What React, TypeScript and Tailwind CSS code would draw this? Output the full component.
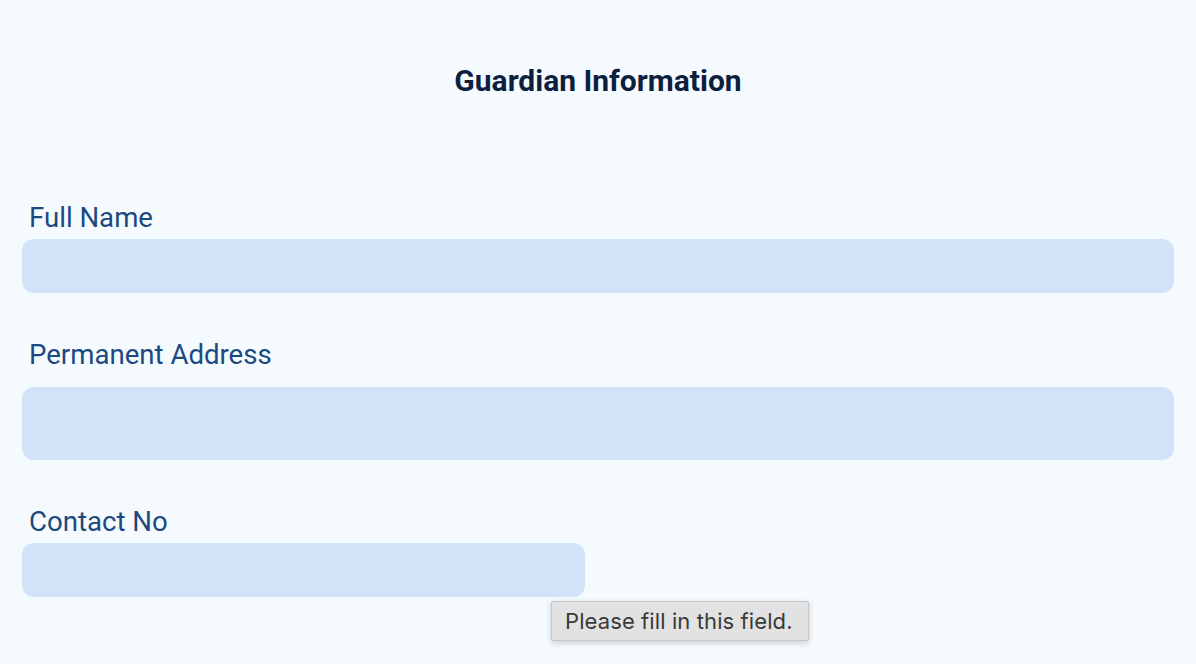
import React from "react";

export default function App() {
  return (
    <div className="min-h-[664px] w-full bg-[#f5faff] px-[22px] pt-[62px] font-['Roboto',sans-serif]">
      <h2 className="text-center text-[30px] font-bold leading-[38px] text-[#0c1f3f]">Guardian Information</h2>
      <div className="mt-[100px]">
        <label className="block pl-[7px] text-[27.6px] leading-[36px] text-[#1c4a80]">Full Name</label>
        <div className="mt-[3px] h-[54px] w-full rounded-[12px] bg-[#d1e3f7]" />
      </div>
      <div className="mt-[44px]">
        <label className="block pl-[7px] text-[27.6px] leading-[36px] text-[#1c4a80]">Permanent Address</label>
        <div className="mt-[14px] h-[73px] w-full rounded-[12px] bg-[#d1e3f7]" />
      </div>
      <div className="relative mt-[44px]">
        <label className="block pl-[7px] text-[27.6px] leading-[36px] text-[#1c4a80]">Contact No</label>
        <div className="mt-[3px] h-[54px] w-[563px] rounded-[12px] bg-[#d1e3f7]" />
        <div className="absolute left-[529px] top-[97px] rounded-[2px] border border-[#c8c8c8] bg-[#e2e2e2] pl-[13px] pr-[15px] py-[6px] text-[22px] leading-[26px] tracking-[0.1px] text-[#3a3a3a] shadow-[0_2px_6px_rgba(0,0,0,0.18)] font-['Inter',sans-serif]">
          Please fill in this field.
        </div>
      </div>
    </div>
  );
}
